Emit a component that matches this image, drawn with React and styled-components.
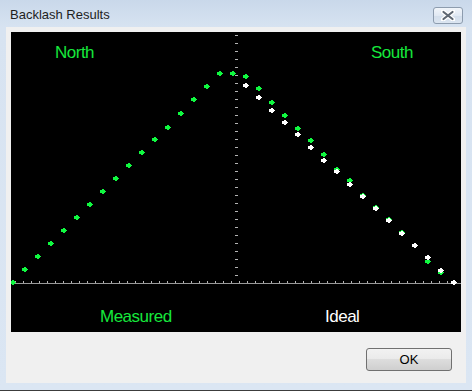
import React from 'react';
import styled, { createGlobalStyle } from 'styled-components';

const GlobalStyle = createGlobalStyle`
html, body {
  margin: 0;
  padding: 0;
  background: #dbe6f3;
}
`;

const Window = styled.div`
width: 472px;
height: 391px;
box-sizing: border-box;
display: flex;
flex-direction: column;
background: linear-gradient(to bottom, #c9d8ea 0px, #d7e3f1 27px, #dbe6f3 100%);
border-bottom: 1px solid #3c3c3c;
padding-bottom: 7px;
font-family: "Liberation Sans", Arial, sans-serif;
`;

const TitleBar = styled.div`
height: 27px;
display: flex;
align-items: flex-start;
justify-content: space-between;
padding: 0 9px 0 10px;
`;

const Title = styled.span`
font-size: 13px;
color: #1e1e1e;
margin-top: 7px;
`;

const CloseButton = styled.div`
width: 30px;
height: 17px;
margin-top: 7px;
box-sizing: border-box;
border: 1px solid #8d9cae;
border-radius: 3px;
background: linear-gradient(to bottom, #f1f5fa 0%, #e1e9f3 50%, #d3deeb 51%, #dbe5f1 100%);
display: flex;
align-items: center;
justify-content: center;
`;

const Client = styled.div`
flex: 1;
margin: 0 6px;
background: #f0f0f0;
padding: 5px;
display: flex;
flex-direction: column;
`;

const Chart = styled.div`
width: 450px;
height: 300px;
background: #000;
`;

const Footer = styled.div`
display: flex;
justify-content: flex-end;
padding: 16px 9px 0 0;
`;

const Button = styled.button`
width: 86px;
height: 23px;
box-sizing: border-box;
border: 1px solid #707070;
border-radius: 3px;
background: linear-gradient(to bottom, #f2f2f2 0%, #ebebeb 45%, #dddddd 50%, #cfcfcf 100%);
font-family: "Liberation Sans", Arial, sans-serif;
font-size: 13px;
color: #000;
padding: 0;
`;

const Label = styled.text`
font-family: "Liberation Sans", Arial, sans-serif;
font-size: 17px;
letter-spacing: -0.5px;
fill: ${p => (p.$white ? '#ffffff' : '#16e83c')};
`;

const green = [
  [12, 282], [24, 269], [37, 256], [50, 243], [63, 230], [76, 217], [89, 204],
  [102, 191], [115, 178], [128, 165], [141, 152], [154, 139], [167, 127],
  [180, 113], [193, 99], [206, 86], [219, 73], [232, 73], [245, 76], [258, 88],
  [271, 102], [284, 115], [297, 128], [310, 140], [323, 154], [336, 169],
  [349, 180], [362, 195], [375, 207], [388, 219], [401, 232], [414, 245],
  [427, 261], [440, 272],
];

const white = [
  [245, 85], [258, 97], [271, 110], [284, 122], [297, 134], [310, 147],
  [323, 160], [336, 171], [349, 184], [362, 196], [375, 208], [388, 220],
  [401, 233], [414, 245], [427, 257], [440, 270], [453, 282],
];

const OX = 11;
const OY = 32;

function Marker({ x, y, color }) {
  const cx = x - OX + 0.5;
  const cy = y - OY + 0.5;
  const pts = [
    [-3, -1.5], [-1, -1.5], [-1, -2.5], [1, -2.5], [3.5, 0],
    [1, 2.5], [-1, 2.5], [-1, 1.5], [-3, 1.5],
  ].map(([a, b]) => `${cx + a},${cy + b}`).join(' ');
  return <polygon points={pts} fill={color} shapeRendering="crispEdges" />;
}

function Plot() {
  const vTicks = [];
  for (let y = 3; y < 251; y += 8) vTicks.push(y);
  const hTicks = [];
  for (let x = 4; x < 450; x += 8) hTicks.push(x);

  return (
    <svg width="450" height="300" viewBox="0 0 450 300">
      {vTicks.map(y => (
        <rect key={'v' + y} x="224" y={y} width="3" height="1" fill="#b4b4b4" />
      ))}
      <rect x="0" y="251" width="450" height="1" fill="#9a9a9a" />
      {hTicks.map(x => (
        <rect key={'h' + x} x={x} y="249" width="1" height="2" fill="#b4b4b4" />
      ))}
      {green.map(([x, y]) => <Marker key={'g' + x} x={x} y={y} color="#10f840" />)}
      {white.map(([x, y]) => <Marker key={'w' + x} x={x} y={y} color="#ffffff" />)}
      <Label x="44" y="26">North</Label>
      <Label x="360" y="26">South</Label>
      <Label x="89" y="290">Measured</Label>
      <Label x="314" y="290" $white>Ideal</Label>
    </svg>
  );
}

export default function App() {
  return (
    <>
      <GlobalStyle />
      <Window>
        <TitleBar>
          <Title>Backlash Results</Title>
          <CloseButton>
            <svg width="14" height="11" viewBox="0 0 14 11">
              <path d="M2 1.5 L12 9.5 M12 1.5 L2 9.5" stroke="#ffffff" strokeWidth="4.5" strokeLinecap="round" />
              <path d="M2.5 2 L11.5 9 M11.5 2 L2.5 9" stroke="#5f6873" strokeWidth="2.2" strokeLinecap="round" />
            </svg>
          </CloseButton>
        </TitleBar>
        <Client>
          <Chart>
            <Plot />
          </Chart>
          <Footer>
            <Button>OK</Button>
          </Footer>
        </Client>
      </Window>
    </>
  );
}
